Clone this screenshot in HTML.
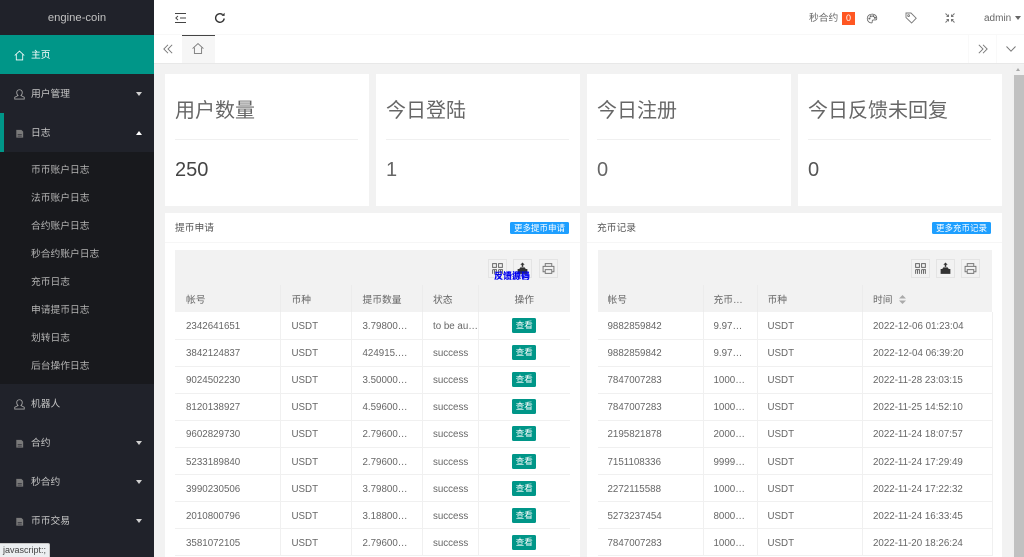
<!DOCTYPE html>
<html lang="zh"><head><meta charset="utf-8"><title>engine-coin</title>
<style>
*{box-sizing:border-box}
html,body{margin:0;padding:0;width:1024px;height:557px;overflow:hidden;background:#f2f2f2;font-family:"Liberation Sans","Noto Sans CJK SC",sans-serif;color:#666}
#wrap{position:absolute;left:0;top:0;width:1024px;height:557px;overflow:hidden;background:#f2f2f2;filter:blur(.35px)}
.a{position:absolute}
#side{left:0;top:0;width:154px;height:557px;background:#20222a;overflow:hidden}
#side .logo{height:35px;line-height:37px;text-align:center;color:#c2c2c2;font-size:11.25px}
.m{position:absolute;left:0;width:154px;height:39px;line-height:41px;padding-left:31px;font-size:9.75px;color:#c6c6c6}
.m svg{position:absolute;left:14px;top:15px;width:11px;height:11px}
.m i{position:absolute;left:136px;top:18px;border:3.5px solid transparent;border-top:4px solid #d0d0d0;border-bottom:0}
.m i.u{border-top:0;border-bottom:4px solid #fff;top:18px}
.s{position:absolute;left:0;width:154px;height:28px;line-height:30px;padding-left:31px;font-size:9.75px;color:#b4b4b4}
#hd{left:154px;top:0;width:870px;height:35px;background:#fff;border-bottom:1px solid #f8f8f8}
#tabs{left:154px;top:35px;width:870px;height:29px;background:#fff;border-bottom:1px solid #e8e8e8}
.card{position:absolute;top:74px;width:204px;height:132px;background:#fff;padding:0 11px 0 10px}
.card h3{margin:0;height:66px;line-height:75px;font-size:20px;font-weight:400;color:#666;border-bottom:1px solid #f0f0f0}
.card p{margin:0;line-height:61px;font-size:20px;color:#555}
.panel{position:absolute;top:213px;width:415px;height:344px;background:#fff;overflow:hidden}
.panel .t{height:30px;line-height:32px;padding-left:10px;font-size:9.75px;color:#555;border-bottom:1px solid #f6f6f6}
.btn{position:absolute;top:9px;right:11px;height:12px;line-height:12px;background:#1e9fff;color:#fff;font-size:8.5px;padding:0 4px;border-radius:1.5px;white-space:nowrap}
.tb{position:absolute;left:10px;top:37px;width:395px;height:35px;background:#f2f2f2}
.tb b{position:absolute;top:9px;width:19px;height:19px;border:1px solid #e4e4e4}
.tb svg{position:absolute;left:2px;top:2px;width:13px;height:13px}
table{position:absolute;left:10px;top:72px;width:395px;border-collapse:collapse;table-layout:fixed;font-size:9.75px}
th{height:27px;background:#f2f2f2;font-weight:400;font-size:9.75px;color:#666;text-align:left;padding:0 11px;border-right:1px solid #ececec;white-space:nowrap;overflow:hidden}
td{height:27.1px;padding:2px 11px 0;border-bottom:1px solid #f0f0f0;border-right:1px solid #f0f0f0;color:#666;white-space:nowrap;overflow:hidden}
td:nth-child(4),th:nth-child(4){padding-left:10.5px}
.op{text-align:center;padding:0;box-shadow:-3px 0 5px rgba(0,0,0,.07);border-right:0}
.ck{display:inline-block;width:24px;height:15px;line-height:15px;background:#009688;color:#fff;font-size:8.5px;border-radius:1.5px;text-align:center;vertical-align:middle}
.rt td,.rt th{padding-left:10px;padding-right:10px}
.rt td:first-child,.rt th:first-child{padding-left:9.5px}
.rt td:nth-child(4),.rt th:nth-child(4){padding-left:10.5px}
</style></head><body>
<div id="wrap">

<div id="side" class="a">
<div class="logo">engine-coin</div>
<div class="m" style="top:35px;background:#009688;color:#fff"><svg viewBox="0 0 12 12" fill="none" stroke="#fff" stroke-width=".9"><path d="M.8 6L6 1.2L11.2 6M2.5 4.8V10.8H9.5V4.8"/></svg>主页</div>
<div class="m" style="top:74px"><svg viewBox="0 0 12 12" fill="none" stroke="#aaa" stroke-width=".9"><path d="M6 .8C4 .8 3 2.2 3 4C3 5.6 3.6 6.6 4.4 7.2L.8 9V11H11.2V9L7.6 7.2C8.4 6.6 9 5.6 9 4C9 2.2 8 .8 6 .8Z"/></svg>用户管理<i></i></div>
<div class="m" style="top:113px"><svg viewBox="0 0 12 12" fill="#7a7a7a"><path d="M2.5 2H8L10 4V10.5H2.5Z"/><path d="M4 7H8.5M4 8.8H8.5" stroke="#20222a" stroke-width=".7"/></svg>日志<i class="u"></i></div>
<div class="a" style="left:0;top:113px;width:3.5px;height:39px;background:#009688"></div>
<div class="a" style="left:0;top:152px;width:154px;height:232px;background:#18191d"></div>
<div class="s" style="top:156px">币币账户日志</div>
<div class="s" style="top:184px">法币账户日志</div>
<div class="s" style="top:212px">合约账户日志</div>
<div class="s" style="top:240px">秒合约账户日志</div>
<div class="s" style="top:268px">充币日志</div>
<div class="s" style="top:296px">申请提币日志</div>
<div class="s" style="top:324px">划转日志</div>
<div class="s" style="top:352px">后台操作日志</div>
<div class="m" style="top:384px"><svg viewBox="0 0 12 12" fill="none" stroke="#aaa" stroke-width=".9"><path d="M6 .8C4 .8 3 2.2 3 4C3 5.6 3.6 6.6 4.4 7.2L.8 9V11H11.2V9L7.6 7.2C8.4 6.6 9 5.6 9 4C9 2.2 8 .8 6 .8Z"/></svg>机器人</div>
<div class="m" style="top:423px"><svg viewBox="0 0 12 12" fill="#7a7a7a"><path d="M2.5 2H8L10 4V10.5H2.5Z"/><path d="M4 7H8.5M4 8.8H8.5" stroke="#20222a" stroke-width=".7"/></svg>合约<i></i></div>
<div class="m" style="top:462px"><svg viewBox="0 0 12 12" fill="#7a7a7a"><path d="M2.5 2H8L10 4V10.5H2.5Z"/><path d="M4 7H8.5M4 8.8H8.5" stroke="#20222a" stroke-width=".7"/></svg>秒合约<i></i></div>
<div class="m" style="top:501px"><svg viewBox="0 0 12 12" fill="#7a7a7a"><path d="M2.5 2H8L10 4V10.5H2.5Z"/><path d="M4 7H8.5M4 8.8H8.5" stroke="#20222a" stroke-width=".7"/></svg>币币交易<i></i></div>
</div>
<div class="a" style="left:0;top:543px;width:50px;height:14px;background:#eceff1;border:1px solid #c8c8c8;border-left:0;border-bottom:0;border-top-right-radius:2px;font-size:9px;line-height:13px;padding-left:3px;color:#444;z-index:5;white-space:nowrap">javascript:;</div>

<div id="hd" class="a"></div>
<svg class="a" style="left:175px;top:13px" width="11" height="10" viewBox="0 0 11 10" fill="none" stroke="#444" stroke-width="1"><path d="M0 .5H11M5 5H11M0 9.5H11"/><path d="M3 3L0.8 5L3 7" stroke-width=".9"/></svg>
<svg class="a" style="left:214px;top:12px" width="12" height="12" viewBox="0 0 12 12" fill="none" stroke="#333" stroke-width="1.4"><path d="M10.2 6.5A4.3 4.3 0 1 1 8.6 2.6"/><path d="M10.6 0.8V3.9H7.5Z" fill="#333" stroke="none"/></svg>
<div class="a" style="left:809px;top:12px;font-size:9.75px;line-height:14px;color:#666">秒合约</div>
<div class="a" style="left:842px;top:12px;width:13px;height:13px;background:#ff5722;color:#fff;font-size:9px;line-height:13px;text-align:center">0</div>
<svg class="a" style="left:866px;top:13px" width="12" height="11" viewBox="0 0 12 12" fill="none" stroke="#666" stroke-width=".9"><path d="M6 1.2C2.8 1.2 .8 3.4 .8 6C.8 8.8 3 10.8 5.4 10.8C6.6 10.8 6.2 9.4 6.2 8.8C6.2 7.8 7 7.6 8 7.6H9.8C11 7.6 11.2 6.6 11.2 5.8C11.2 3 9 1.2 6 1.2Z"/><circle cx="3.2" cy="6" r=".7" fill="#666"/><circle cx="4.6" cy="3.6" r=".7" fill="#666"/><circle cx="7.4" cy="3.4" r=".7" fill="#666"/><circle cx="9.2" cy="5.2" r=".7" fill="#666"/></svg>
<svg class="a" style="left:905px;top:12px" width="12" height="12" viewBox="0 0 12 12" fill="none" stroke="#777" stroke-width=".9"><path d="M1 1H6L11.2 6.2L6.6 11L1 5.6Z"/><circle cx="3.6" cy="3.6" r=".9"/></svg>
<svg class="a" style="left:945px;top:13px" width="10" height="10" viewBox="0 0 10 10" fill="none" stroke="#777" stroke-width="1"><path d="M.5 .5L3.5 3.5M3.5 1.5V3.5H1.5M9.5 .5L6.5 3.5M6.5 1.5V3.5H8.5M.5 9.5L3.5 6.5M3.5 8.5V6.5H1.5M9.5 9.5L6.5 6.5M6.5 8.5V6.5H8.5"/></svg>
<div class="a" style="left:984px;top:11px;font-size:10px;line-height:14px;color:#666;padding-top:.5px">admin</div>
<div class="a" style="left:1015px;top:16px;border:3.5px solid transparent;border-top:4px solid #666;border-bottom:0"></div>

<div id="tabs" class="a"></div>
<svg class="a" style="left:163px;top:44px" width="10" height="10" viewBox="0 0 12 12" fill="none" stroke="#777" stroke-width="1.1"><path d="M6 1L1 6L6 11M11 1L6 6L11 11"/></svg>
<div class="a" style="left:182px;top:35px;width:33px;height:28px;background:#f6f6f6;border-top:1px solid #444"></div>
<svg class="a" style="left:192px;top:43px" width="12" height="11" viewBox="0 0 12 11" fill="none" stroke="#777" stroke-width=".9"><path d="M.6 5.6L6 .6L11.4 5.6M2.4 4.6V10.4H9.6V4.6"/></svg>
<div class="a" style="left:968px;top:35px;width:1px;height:28px;background:#f9f9f9"></div>
<div class="a" style="left:996px;top:35px;width:1px;height:28px;background:#f9f9f9"></div>
<svg class="a" style="left:977.5px;top:44px" width="10" height="10" viewBox="0 0 12 12" fill="none" stroke="#777" stroke-width="1.1"><path d="M1 1L6 6L1 11M6 1L11 6L6 11"/></svg>
<svg class="a" style="left:1006px;top:46px" width="10" height="6" viewBox="0 0 10 6" fill="none" stroke="#777" stroke-width="1"><path d="M.5 .5L5 5.2L9.5 .5"/></svg>

<div class="a" style="left:1012px;top:65px;width:12px;height:492px;background:#f1f1f1"></div>
<div class="a" style="left:1016px;top:68px;border:2.5px solid transparent;border-bottom:3px solid #a8a8a8;border-top:0"></div>
<div class="a" style="left:1014px;top:75px;width:10px;height:482px;background:#c1c1c1"></div>

<div class="card" style="left:165px"><h3>用户数量</h3><p style="color:#444">250</p></div>
<div class="card" style="left:376px"><h3>今日登陆</h3><p style="color:#666">1</p></div>
<div class="card" style="left:587px"><h3>今日注册</h3><p style="color:#666">0</p></div>
<div class="card" style="left:798px"><h3>今日反馈未回复</h3><p style="color:#555">0</p></div>

<div class="panel" style="left:165px">
<div class="t">提币申请</div><div class="btn">更多提币申请</div>
<div class="tb">
<b style="left:313px"><svg viewBox="0 0 12 12" fill="none" stroke="#666" stroke-width=".9"><path d="M1.5 1.5H5V5H1.5ZM7 1.5H10.5V5H7ZM1.5 7H5V11M3.2 7V11M1.5 7V11M7 7H10.5V11M8.8 7V11M7 7V11"/></svg></b>
<b style="left:338px"><svg viewBox="0 0 12 12" fill="#333"><path d="M1.5 6.5H3L4 5H8L9 6.5H10.5V11H1.5ZM5.3 1.5H6.7V4.5H5.3ZM6 .5L8 2.5H4Z"/></svg></b>
<b style="left:364px"><svg viewBox="0 0 12 12" fill="none" stroke="#777" stroke-width=".9"><path d="M3 4V1.5H9V4M3 9H1V4H11V9H9M3 7H9V10.5H3Z"/></svg></b>
</div>
<div class="a" style="left:329px;top:58px;font-size:9px;line-height:11px;color:#00e;font-weight:700;white-space:nowrap;z-index:3">反馈源码</div>
<div class="a" style="left:329px;top:58px;font-size:9px;line-height:11px;color:#00e;white-space:nowrap;z-index:3">汉语拼音</div>
<table><colgroup><col style="width:105px"><col style="width:71px"><col style="width:71px"><col style="width:56px"><col style="width:92px"></colgroup>
<tr><th>帐号</th><th>币种</th><th>提币数量</th><th>状态</th><th class="op">操作</th></tr>
<tr><td>2342641651</td><td>USDT</td><td>3.79800…</td><td>to be au…</td><td class="op"><span class="ck">查看</span></td></tr>
<tr><td>3842124837</td><td>USDT</td><td>424915.…</td><td>success</td><td class="op"><span class="ck">查看</span></td></tr>
<tr><td>9024502230</td><td>USDT</td><td>3.50000…</td><td>success</td><td class="op"><span class="ck">查看</span></td></tr>
<tr><td>8120138927</td><td>USDT</td><td>4.59600…</td><td>success</td><td class="op"><span class="ck">查看</span></td></tr>
<tr><td>9602829730</td><td>USDT</td><td>2.79600…</td><td>success</td><td class="op"><span class="ck">查看</span></td></tr>
<tr><td>5233189840</td><td>USDT</td><td>2.79600…</td><td>success</td><td class="op"><span class="ck">查看</span></td></tr>
<tr><td>3990230506</td><td>USDT</td><td>3.79800…</td><td>success</td><td class="op"><span class="ck">查看</span></td></tr>
<tr><td>2010800796</td><td>USDT</td><td>3.18800…</td><td>success</td><td class="op"><span class="ck">查看</span></td></tr>
<tr><td>3581072105</td><td>USDT</td><td>2.79600…</td><td>success</td><td class="op"><span class="ck">查看</span></td></tr>
</table>
</div>

<div class="panel" style="left:587px">
<div class="t">充币记录</div><div class="btn">更多充币记录</div>
<div class="tb" style="left:11px;width:394px">
<b style="left:313px"><svg viewBox="0 0 12 12" fill="none" stroke="#666" stroke-width=".9"><path d="M1.5 1.5H5V5H1.5ZM7 1.5H10.5V5H7ZM1.5 7H5V11M3.2 7V11M1.5 7V11M7 7H10.5V11M8.8 7V11M7 7V11"/></svg></b>
<b style="left:338px"><svg viewBox="0 0 12 12" fill="#333"><path d="M1.5 6.5H3L4 5H8L9 6.5H10.5V11H1.5ZM5.3 1.5H6.7V4.5H5.3ZM6 .5L8 2.5H4Z"/></svg></b>
<b style="left:363px"><svg viewBox="0 0 12 12" fill="none" stroke="#777" stroke-width=".9"><path d="M3 4V1.5H9V4M3 9H1V4H11V9H9M3 7H9V10.5H3Z"/></svg></b>
</div>
<table class="rt" style="left:11px;width:394px"><colgroup><col style="width:105px"><col style="width:54px"><col style="width:105px"><col style="width:130px"></colgroup>
<tr><th>帐号</th><th>充币…</th><th>币种</th><th style="border-right:0">时间 <svg width="7" height="9" viewBox="0 0 7 9" fill="#aaa" style="margin-left:4px;vertical-align:-1px"><path d="M3.5 0L7 3.5H0ZM0 5.5H7L3.5 9Z"/></svg></th></tr>
<tr><td>9882859842</td><td>9.97…</td><td>USDT</td><td>2022-12-06 01:23:04</td></tr>
<tr><td>9882859842</td><td>9.97…</td><td>USDT</td><td>2022-12-04 06:39:20</td></tr>
<tr><td>7847007283</td><td>1000…</td><td>USDT</td><td>2022-11-28 23:03:15</td></tr>
<tr><td>7847007283</td><td>1000…</td><td>USDT</td><td>2022-11-25 14:52:10</td></tr>
<tr><td>2195821878</td><td>2000…</td><td>USDT</td><td>2022-11-24 18:07:57</td></tr>
<tr><td>7151108336</td><td>9999…</td><td>USDT</td><td>2022-11-24 17:29:49</td></tr>
<tr><td>2272115588</td><td>1000…</td><td>USDT</td><td>2022-11-24 17:22:32</td></tr>
<tr><td>5273237454</td><td>8000…</td><td>USDT</td><td>2022-11-24 16:33:45</td></tr>
<tr><td>7847007283</td><td>1000…</td><td>USDT</td><td>2022-11-20 18:26:24</td></tr>
</table>
</div>
</div>
</body></html>
